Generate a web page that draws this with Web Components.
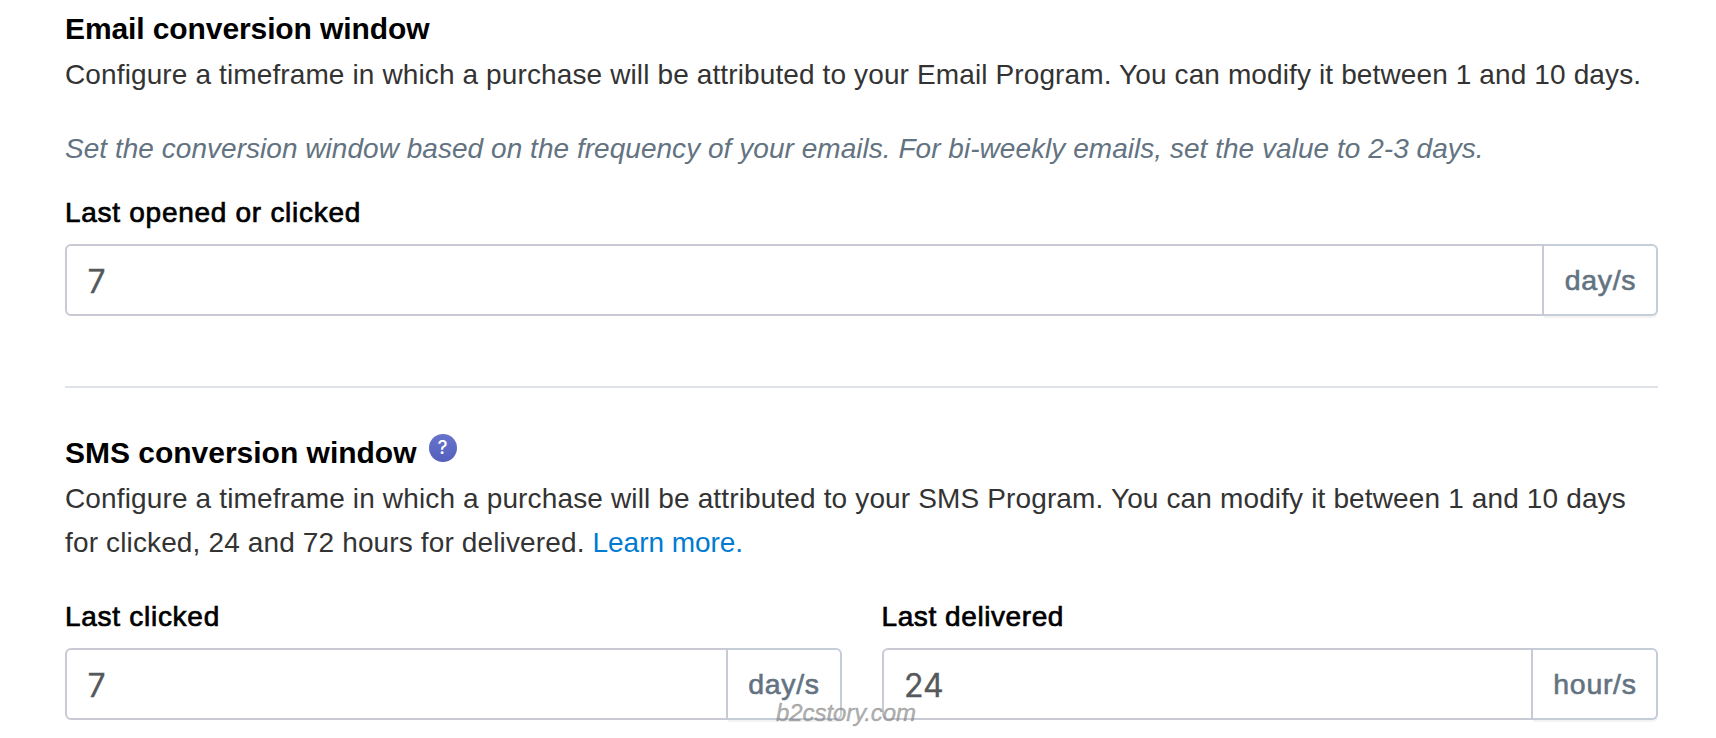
<!DOCTYPE html>
<html lang="en">
<head>
<meta charset="utf-8">
<title>Conversion windows</title>
<style>
html, body { margin: 0; background: #fff; }
body { font-family: "Liberation Sans", Arial, sans-serif; font-size: 28px; line-height: 44px; color: #333; }
</style>
</head>
<body>
<conversion-settings></conversion-settings>
<script>
function define(name, markup, setup) {
  const template = document.createElement('template');
  template.innerHTML = markup;
  customElements.define(name, class extends HTMLElement {
    connectedCallback() {
      if (this.shadowRoot) return;
      const root = this.attachShadow({ mode: 'open' });
      root.append(template.content.cloneNode(true));
      if (setup) setup(this, root);
    }
  });
}

define('section-title', `
<style>
:host { display: flex; align-items: flex-start; height: 44px; font-size: 30px; font-weight: 700; line-height: 44px; color: #000; white-space: nowrap; letter-spacing: var(--title-spacing, -0.1px); }
</style><slot></slot>`);

define('help-badge', `
<style>
:host { display: flex; align-items: center; justify-content: center; width: 28px; height: 28px; margin: 3px 0 0 12px; border-radius: 50%; background: linear-gradient(#6773cb, #5560bd); color: #fff; font: 500 19px/28px Inter, sans-serif; letter-spacing: 0; }
</style><span>?</span>`);

define('body-copy', `
<style>
:host { display: block; letter-spacing: var(--copy-spacing, 0.14px); white-space: nowrap; }
::slotted(a) { color: #007bd1; text-decoration: none; letter-spacing: -0.05px; }
</style><slot></slot>`);

define('hint-text', `
<style>
:host { display: block; font-style: italic; color: #637381; letter-spacing: 0.035px; white-space: nowrap; }
</style><slot></slot>`);

define('section-divider', `
<style>
:host { display: block; height: 2px; background: #dfe3e8; }
</style>`);

define('unit-field', `
<style>
:host { display: block; min-width: 0; }
.label { height: 44px; color: #000; letter-spacing: var(--label-spacing, .72px); -webkit-text-stroke: .7px #000; white-space: nowrap; }
.box { display: flex; height: 72px; margin-top: 9px; }
.value, .unit { box-sizing: border-box; height: 72px; border: 2px solid #c9cad3; background: #fff; }
.value { flex: 1; border-radius: 6px 0 0 6px; padding-left: 20.5px; font: 32px/71px Inter, sans-serif; color: #55595c; -webkit-text-stroke: .3px #55595c; }
.unit { width: var(--unit-width, 114px); border-color: #c4cdd8; border-left: 0; border-radius: 0 6px 6px 0; padding-left: 1px; text-align: center; font-size: 28.5px; line-height: 69px; letter-spacing: .7px; color: #637381; -webkit-text-stroke: .6px #637381; box-shadow: 0 2px 0 rgba(22, 29, 37, .05); }
</style>
<div class="label"></div>
<div class="box"><div class="value"></div><div class="unit"></div></div>`,
(host, root) => {
  for (const part of ['label', 'value', 'unit'])
    root.querySelector('.' + part).textContent = host.getAttribute(part);
});

define('field-row', `
<style>
:host { display: grid; grid-template-columns: 1fr 1fr; column-gap: 40px; }
</style><slot></slot>`);

define('water-mark', `
<style>
:host { position: absolute; left: 776px; top: 701px; font: italic 24px/24px "Liberation Sans", Arial, sans-serif; letter-spacing: -.08px; color: rgba(125, 125, 125, .62); -webkit-text-stroke: .5px rgba(125, 125, 125, .5); white-space: nowrap; }
</style><slot></slot>`);

define('conversion-settings', `
<style>
:host { display: block; position: relative; box-sizing: border-box; width: 1716px; height: 738px; padding: 7px 58px 0 65px; overflow: hidden; }
hint-text { margin-top: 30px; }
.email { margin-top: 20px; --unit-width: 114px; }
section-divider { margin-top: 70px; }
.sms-title { margin-top: 43px; --title-spacing: -0.01px; }
.sms-title + body-copy { margin-top: 2px; }
.email-title + body-copy { margin-top: 2px; --copy-spacing: 0.122px; }
field-row { margin-top: 30px; }
.hours { --unit-width: 125px; --label-spacing: .58px; }
</style>
<section-title class="email-title">Email conversion window</section-title>
<body-copy>Configure a timeframe in which a purchase will be attributed to your Email Program. You can modify it between 1 and 10 days.</body-copy>
<hint-text>Set the conversion window based on the frequency of your emails. For bi-weekly emails, set the value to 2-3 days.</hint-text>
<unit-field class="email" label="Last opened or clicked" value="7" unit="day/s"></unit-field>
<section-divider></section-divider>
<section-title class="sms-title">SMS conversion window<help-badge></help-badge></section-title>
<body-copy>Configure a timeframe in which a purchase will be attributed to your SMS Program. You can modify it between 1 and 10 days<br>for clicked, 24 and 72 hours for delivered. <a href="#">Learn more.</a></body-copy>
<field-row>
<unit-field label="Last clicked" value="7" unit="day/s"></unit-field>
<unit-field class="hours" label="Last delivered" value="24" unit="hour/s"></unit-field>
</field-row>
<water-mark>b2cstory.com</water-mark>`);
</script>
</body>
</html>
